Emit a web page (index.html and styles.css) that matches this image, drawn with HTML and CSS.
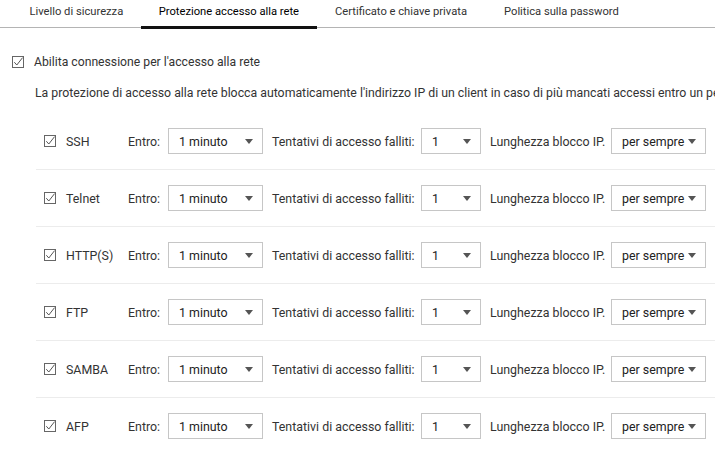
FILE: index.html
```html
<!DOCTYPE html>
<html lang="it">
<head>
<meta charset="utf-8">
<title>Protezione accesso alla rete</title>
<link rel="stylesheet" href="styles.css">
</head>
<body>
<div class="tabs">
  <div class="tab first">Livello di sicurezza</div>
  <div class="tab active">Protezione accesso alla rete</div>
  <div class="tab">Certificato e chiave privata</div>
  <div class="tab">Politica sulla password</div>
</div>

<div class="content">
  <label class="check-row">
    <svg class="cb" width="12" height="12" viewBox="0 0 12 12"><rect x="0.5" y="0.5" width="11" height="11" fill="none" stroke="#666"/><path d="M2.3 6.2 L4.8 9 L10.6 1.6" fill="none" stroke="#555" stroke-width="1"/></svg>
    <span>Abilita connessione per l'accesso alla rete</span>
  </label>
  <p class="desc">La protezione di accesso alla rete blocca automaticamente l'indirizzo IP di un client in caso di più mancati accessi entro un periodo di tempo specificato.</p>

  <div class="rows">
    <div class="row">
      <svg class="cb" width="12" height="12" viewBox="0 0 12 12"><rect x="0.5" y="0.5" width="11" height="11" fill="none" stroke="#666"/><path d="M2.3 6.2 L4.8 9 L10.6 1.6" fill="none" stroke="#555" stroke-width="1"/></svg>
      <span class="svc">SSH</span>
      <span class="lbl l1">Entro:</span>
      <div class="sel w95"><span>1 minuto</span><i class="arr"></i></div>
      <span class="lbl l2">Tentativi di accesso falliti:</span>
      <div class="sel w60"><span>1</span><i class="arr"></i></div>
      <span class="lbl l3">Lunghezza blocco IP.</span>
      <div class="sel w95"><span>per sempre</span><i class="arr"></i></div>
    </div>
    <div class="row">
      <svg class="cb" width="12" height="12" viewBox="0 0 12 12"><rect x="0.5" y="0.5" width="11" height="11" fill="none" stroke="#666"/><path d="M2.3 6.2 L4.8 9 L10.6 1.6" fill="none" stroke="#555" stroke-width="1"/></svg>
      <span class="svc">Telnet</span>
      <span class="lbl l1">Entro:</span>
      <div class="sel w95"><span>1 minuto</span><i class="arr"></i></div>
      <span class="lbl l2">Tentativi di accesso falliti:</span>
      <div class="sel w60"><span>1</span><i class="arr"></i></div>
      <span class="lbl l3">Lunghezza blocco IP.</span>
      <div class="sel w95"><span>per sempre</span><i class="arr"></i></div>
    </div>
    <div class="row">
      <svg class="cb" width="12" height="12" viewBox="0 0 12 12"><rect x="0.5" y="0.5" width="11" height="11" fill="none" stroke="#666"/><path d="M2.3 6.2 L4.8 9 L10.6 1.6" fill="none" stroke="#555" stroke-width="1"/></svg>
      <span class="svc">HTTP(S)</span>
      <span class="lbl l1">Entro:</span>
      <div class="sel w95"><span>1 minuto</span><i class="arr"></i></div>
      <span class="lbl l2">Tentativi di accesso falliti:</span>
      <div class="sel w60"><span>1</span><i class="arr"></i></div>
      <span class="lbl l3">Lunghezza blocco IP.</span>
      <div class="sel w95"><span>per sempre</span><i class="arr"></i></div>
    </div>
    <div class="row">
      <svg class="cb" width="12" height="12" viewBox="0 0 12 12"><rect x="0.5" y="0.5" width="11" height="11" fill="none" stroke="#666"/><path d="M2.3 6.2 L4.8 9 L10.6 1.6" fill="none" stroke="#555" stroke-width="1"/></svg>
      <span class="svc">FTP</span>
      <span class="lbl l1">Entro:</span>
      <div class="sel w95"><span>1 minuto</span><i class="arr"></i></div>
      <span class="lbl l2">Tentativi di accesso falliti:</span>
      <div class="sel w60"><span>1</span><i class="arr"></i></div>
      <span class="lbl l3">Lunghezza blocco IP.</span>
      <div class="sel w95"><span>per sempre</span><i class="arr"></i></div>
    </div>
    <div class="row">
      <svg class="cb" width="12" height="12" viewBox="0 0 12 12"><rect x="0.5" y="0.5" width="11" height="11" fill="none" stroke="#666"/><path d="M2.3 6.2 L4.8 9 L10.6 1.6" fill="none" stroke="#555" stroke-width="1"/></svg>
      <span class="svc">SAMBA</span>
      <span class="lbl l1">Entro:</span>
      <div class="sel w95"><span>1 minuto</span><i class="arr"></i></div>
      <span class="lbl l2">Tentativi di accesso falliti:</span>
      <div class="sel w60"><span>1</span><i class="arr"></i></div>
      <span class="lbl l3">Lunghezza blocco IP.</span>
      <div class="sel w95"><span>per sempre</span><i class="arr"></i></div>
    </div>
    <div class="row">
      <svg class="cb" width="12" height="12" viewBox="0 0 12 12"><rect x="0.5" y="0.5" width="11" height="11" fill="none" stroke="#666"/><path d="M2.3 6.2 L4.8 9 L10.6 1.6" fill="none" stroke="#555" stroke-width="1"/></svg>
      <span class="svc">AFP</span>
      <span class="lbl l1">Entro:</span>
      <div class="sel w95"><span>1 minuto</span><i class="arr"></i></div>
      <span class="lbl l2">Tentativi di accesso falliti:</span>
      <div class="sel w60"><span>1</span><i class="arr"></i></div>
      <span class="lbl l3">Lunghezza blocco IP.</span>
      <div class="sel w95"><span>per sempre</span><i class="arr"></i></div>
    </div>
  </div>
</div>
</body>
</html>
```

FILE: styles.css
```css
html, body {
  margin: 0;
  padding: 0;
  background: #fff;
  overflow: hidden;
}
body {
  font-family: Roboto, "Liberation Sans", sans-serif;
  color: #333;
  font-size: 12.4px;
  width: 715px;
  height: 453px;
}
.tabs {
  display: flex;
  height: 27px;
  border-bottom: 1px solid #b4b4b4;
  padding-left: 11px;
}
.tab {
  font-size: 11.2px;
  line-height: 12px;
  padding: 6px 18.5px 0;
  color: #333;
  box-sizing: border-box;
  height: 27px;
  white-space: nowrap;
}
.tab.first {
  padding-right: 18px;
}
.tab.active {
  color: #000;
  height: 29px;
  padding-left: 17.5px;
  padding-right: 17.5px;
  border-bottom: 3px solid #111;
  margin-bottom: -1px;
}
.content {
  padding-left: 12px;
}
.check-row {
  display: flex;
  align-items: center;
  gap: 10px;
  height: 20px;
  margin-top: 24px;
  font-size: 12.2px;
}
.cb {
  flex: none;
  display: block;
}
.desc {
  margin: 11px 0 0 23px;
  line-height: 20px;
  white-space: nowrap;
  overflow: hidden;
  font-size: 12.3px;
}
.rows {
  margin-top: 10px;
  margin-left: 24px;
}
.row {
  display: flex;
  align-items: center;
  height: 56px;
  border-bottom: 1px solid #ececec;
  padding-left: 8px;
  white-space: nowrap;
}
.row:last-child {
  border-bottom: none;
}
.svc {
  margin-left: 10px;
  width: 62px;
}
.lbl {
  flex: none;
}
.l1 { width: 40px; }
.l2 { width: 149px; margin-left: 9px; }
.l3 { width: 121px; margin-left: 9px; }
.sel {
  flex: none;
  box-sizing: border-box;
  height: 26px;
  border: 1px solid #c6c6c6;
  display: flex;
  align-items: center;
  justify-content: space-between;
  padding: 0 9px 0 10px;
  color: #222;
  font-size: 12.4px;
}
.w95 { width: 95px; }
.w60 { width: 60px; }
.arr {
  width: 0;
  height: 0;
  border-left: 4px solid transparent;
  border-right: 4px solid transparent;
  border-top: 5px solid #555;
}
```
